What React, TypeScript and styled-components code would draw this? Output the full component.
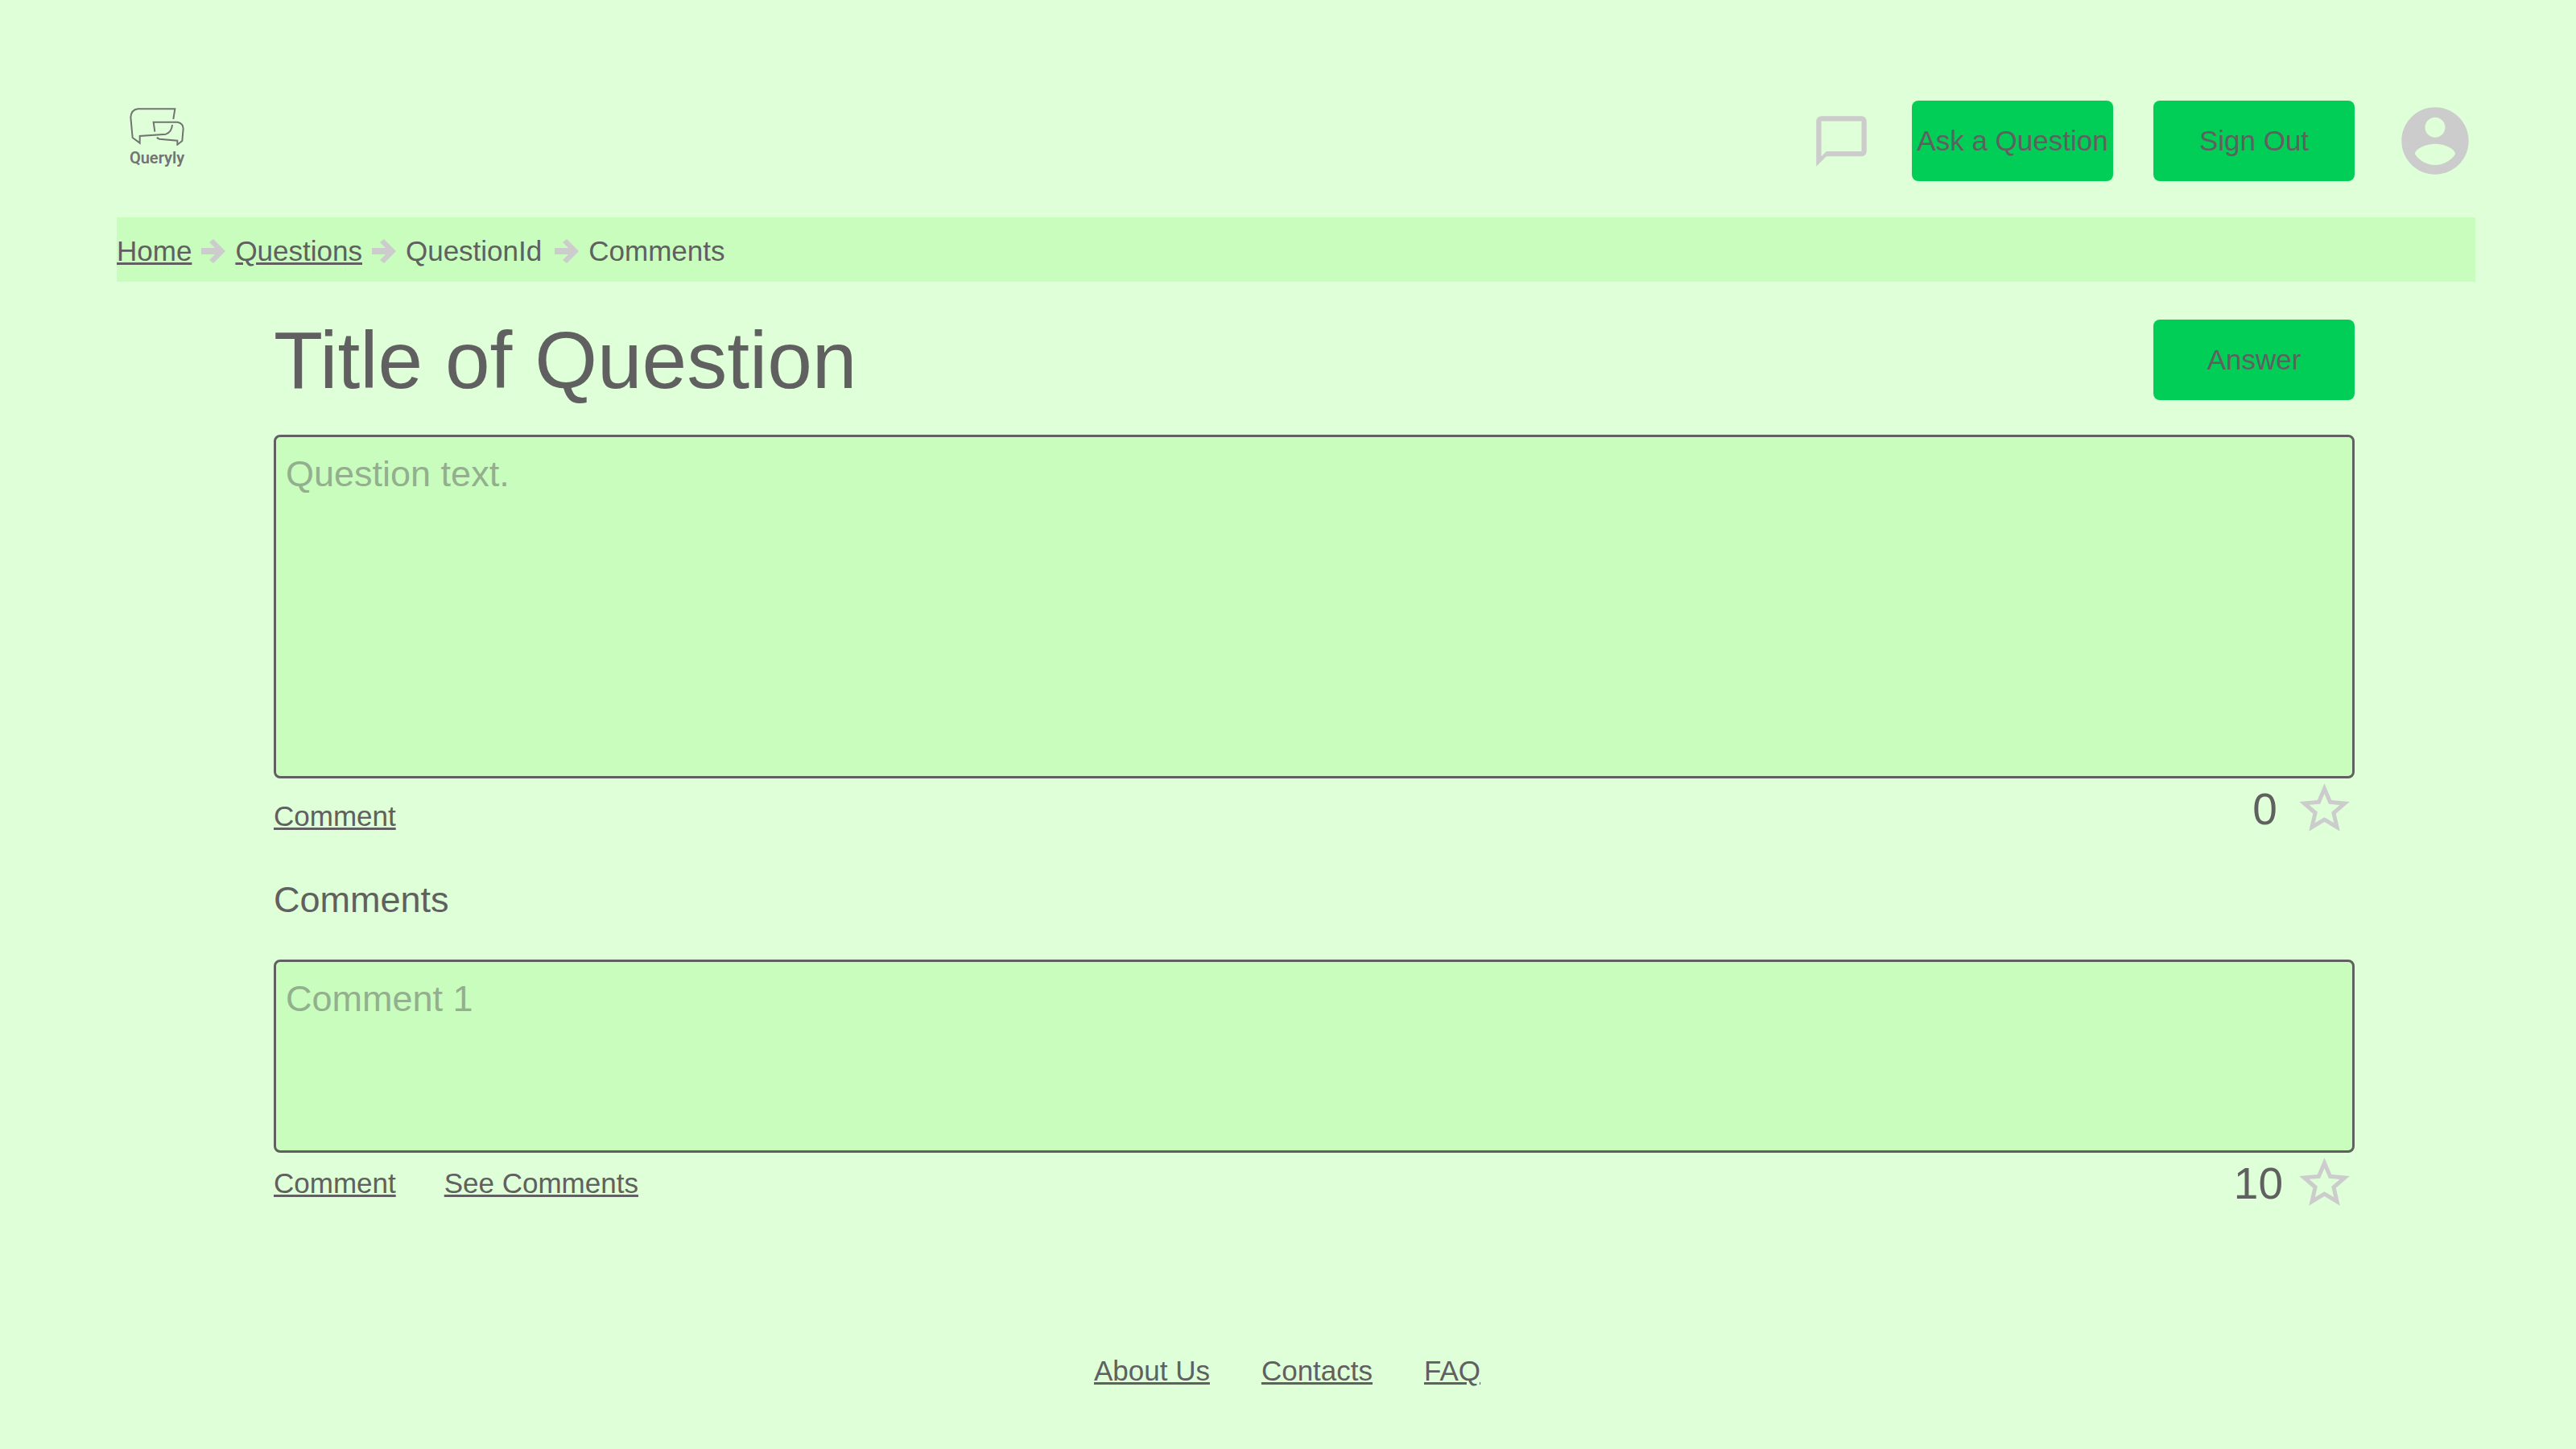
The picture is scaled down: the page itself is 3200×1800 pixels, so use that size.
import React from "react";
import styled, { createGlobalStyle } from "styled-components";

const color = {
  page: "#dfffd8",
  panel: "#c8fdbe",
  text: "#606060",
  placeholder: "#94af8e",
  accent: "#00ce57",
  icon: "#cccccc",
  logo: "#737373",
};

const GlobalStyle = createGlobalStyle`
  *, *::before, *::after { box-sizing: border-box; }
  body {
    margin: 0;
    background: ${color.page};
    color: ${color.text};
    font-family: "Liberation Sans", Arial, sans-serif;
    font-size: 35px;
    line-height: 40px;
  }
`;

const Page = styled.div`
  min-height: 100vh;
  padding: 0 125px 72px 145px;
`;

const Header = styled.header`
  display: flex;
  align-items: center;
  justify-content: space-between;
  padding: 125px 0 45px;
`;

const Logo = styled.a`
  display: flex;
  flex-direction: column;
  align-items: center;
  width: 100px;
  height: 100px;
  padding-top: 8px;
  color: ${color.logo};
  text-decoration: none;
`;

const LogoName = styled.span`
  font-family: Roboto, sans-serif;
  font-size: 20px;
  font-weight: 600;
  line-height: 30px;
`;

const HeaderActions = styled.div`
  display: flex;
  align-items: center;
  gap: 50px;
`;

const Button = styled.button`
  width: 250px;
  height: 100px;
  padding: 0;
  border: 0;
  border-radius: 8px;
  background: ${color.accent};
  color: inherit;
  font: inherit;
  white-space: nowrap;
  cursor: pointer;
`;

const IconButton = styled.button<{ $size: number }>`
  display: block;
  width: ${(p) => p.$size}px;
  height: ${(p) => p.$size}px;
  padding: 0;
  border: 0;
  background: none;
  color: ${color.icon};
  cursor: pointer;

  svg {
    display: block;
    width: 100%;
    height: 100%;
    fill: currentColor;
  }
`;

const Breadcrumbs = styled.nav`
  background: ${color.panel};
`;

const CrumbList = styled.ol`
  display: flex;
  align-items: center;
  gap: 12px;
  height: 80px;
  margin: 0;
  padding: 4px 0 0;
  list-style: none;
`;

const Crumb = styled.li`
  display: flex;
  align-items: center;
  gap: 12px;
`;

const CrumbText = styled.span`
  margin-right: 4px;
`;

const Arrow = styled.svg`
  display: block;
  width: 30px;
  height: 30px;
  fill: ${color.icon};
`;

const TextLink = styled.a`
  color: inherit;
  text-decoration: underline;
`;

const Main = styled.main`
  padding: 47px 150px 0 195px;
`;

const TitleRow = styled.div`
  display: flex;
  align-items: center;
  justify-content: space-between;
  margin-bottom: 43px;
`;

const Title = styled.h1`
  margin: 0;
  font-size: 100px;
  font-weight: 400;
  line-height: 100px;
`;

const Subtitle = styled.h2`
  margin: 50px 0 48px;
  font-size: 45px;
  font-weight: 400;
  line-height: 52px;
`;

const TextBox = styled.textarea<{ $height: number }>`
  display: block;
  width: 100%;
  height: ${(p) => p.$height}px;
  padding: 20px 12px;
  border: 3px solid ${color.text};
  border-radius: 8px;
  background: ${color.panel};
  color: inherit;
  font-family: inherit;
  font-size: 45px;
  line-height: 52px;
  resize: none;

  &::placeholder {
    color: ${color.placeholder};
    opacity: 1;
  }
`;

const PostFooter = styled.div`
  display: flex;
  align-items: center;
  justify-content: space-between;
`;

const PostLinks = styled.div<{ $spaced?: boolean }>`
  display: flex;
  gap: 60px;
  padding-top: ${(p) => (p.$spaced ? 18 : 0)}px;
`;

const Rating = styled.div`
  display: flex;
  align-items: center;
  gap: 14px;
`;

const Count = styled.span`
  min-width: 45px;
  font-size: 55px;
  line-height: 62px;
  text-align: center;
`;

const Footer = styled.footer`
  display: flex;
  justify-content: center;
  gap: 64px;
  margin-top: 176px;
  padding-right: 22px;
`;

const LogoMark = () => (
  <svg width="70" height="48" viewBox="90 70 210 144" fill="none" stroke="currentColor" strokeWidth="6" aria-hidden="true">
    <path d="M256 115L262 77H124Q99 80 97 108L104 184L131 204V178L228 171Q250 163 252 136" />
    <path d="M187 162L182 126H272Q293 131 293 150L289 196L271 210V195L204 189L194 184" />
  </svg>
);

const CrumbArrow = () => (
  <Arrow viewBox="0 0 30 30" aria-hidden="true">
    <path d="M0 11H17L10 4L15 0L30 15L15 30L10 26L17 19H0Z" />
  </Arrow>
);

const StarRating = ({ count }: { count: number }) => (
  <Rating>
    <Count>{count}</Count>
    <IconButton $size={75} type="button" aria-label="Star">
      <svg viewBox="0 0 24 24">
        <path d="M22 9.24l-7.19-.62L12 2 9.19 8.63 2 9.24l5.46 4.73L5.82 21 12 17.27 18.18 21l-1.63-7.03L22 9.24zM12 15.4l-3.76 2.27 1-4.28-3.32-2.88 4.38-.38L12 6.1l1.71 4.04 4.38.38-3.32 2.88 1 4.28L12 15.4z" />
      </svg>
    </IconButton>
  </Rating>
);

export default function App() {
  return (
    <Page>
      <GlobalStyle />
      <Header>
        <Logo href="#">
          <LogoMark />
          <LogoName>Queryly</LogoName>
        </Logo>
        <HeaderActions>
          <IconButton $size={75} type="button" aria-label="Messages">
            <svg viewBox="0 0 24 24">
              <path d="M20 2H4c-1.1 0-2 .9-2 2v18l4-4h14c1.1 0 2-.9 2-2V4c0-1.1-.9-2-2-2zm0 14H6l-2 2V4h16v12z" />
            </svg>
          </IconButton>
          <Button type="button">Ask a Question</Button>
          <Button type="button">Sign Out</Button>
          <IconButton $size={100} type="button" aria-label="Account">
            <svg viewBox="0 0 24 24">
              <path d="M12 2C6.48 2 2 6.48 2 12s4.48 10 10 10 10-4.48 10-10S17.52 2 12 2zm0 3c1.66 0 3 1.34 3 3s-1.34 3-3 3-3-1.34-3-3 1.34-3 3-3zm0 14.2c-2.5 0-4.71-1.28-6-3.22.03-1.99 4-3.08 6-3.08 1.99 0 5.97 1.09 6 3.08-1.29 1.94-3.5 3.22-6 3.22z" />
            </svg>
          </IconButton>
        </HeaderActions>
      </Header>

      <Breadcrumbs aria-label="Breadcrumb">
        <CrumbList>
          <Crumb>
            <TextLink href="#">Home</TextLink>
            <CrumbArrow />
          </Crumb>
          <Crumb>
            <TextLink href="#">Questions</TextLink>
            <CrumbArrow />
          </Crumb>
          <Crumb>
            <CrumbText>QuestionId</CrumbText>
            <CrumbArrow />
          </Crumb>
          <Crumb>
            <CrumbText>Comments</CrumbText>
          </Crumb>
        </CrumbList>
      </Breadcrumbs>

      <Main>
        <TitleRow>
          <Title>Title of Question</Title>
          <Button type="button">Answer</Button>
        </TitleRow>
        <TextBox $height={427} aria-label="Question" placeholder="Question text." />
        <PostFooter>
          <PostLinks $spaced>
            <TextLink href="#">Comment</TextLink>
          </PostLinks>
          <StarRating count={0} />
        </PostFooter>

        <Subtitle>Comments</Subtitle>
        <TextBox $height={240} aria-label="Comment" placeholder="Comment 1" />
        <PostFooter>
          <PostLinks>
            <TextLink href="#">Comment</TextLink>
            <TextLink href="#">See Comments</TextLink>
          </PostLinks>
          <StarRating count={10} />
        </PostFooter>
      </Main>

      <Footer>
        <TextLink href="#">About Us</TextLink>
        <TextLink href="#">Contacts</TextLink>
        <TextLink href="#">FAQ</TextLink>
      </Footer>
    </Page>
  );
}
